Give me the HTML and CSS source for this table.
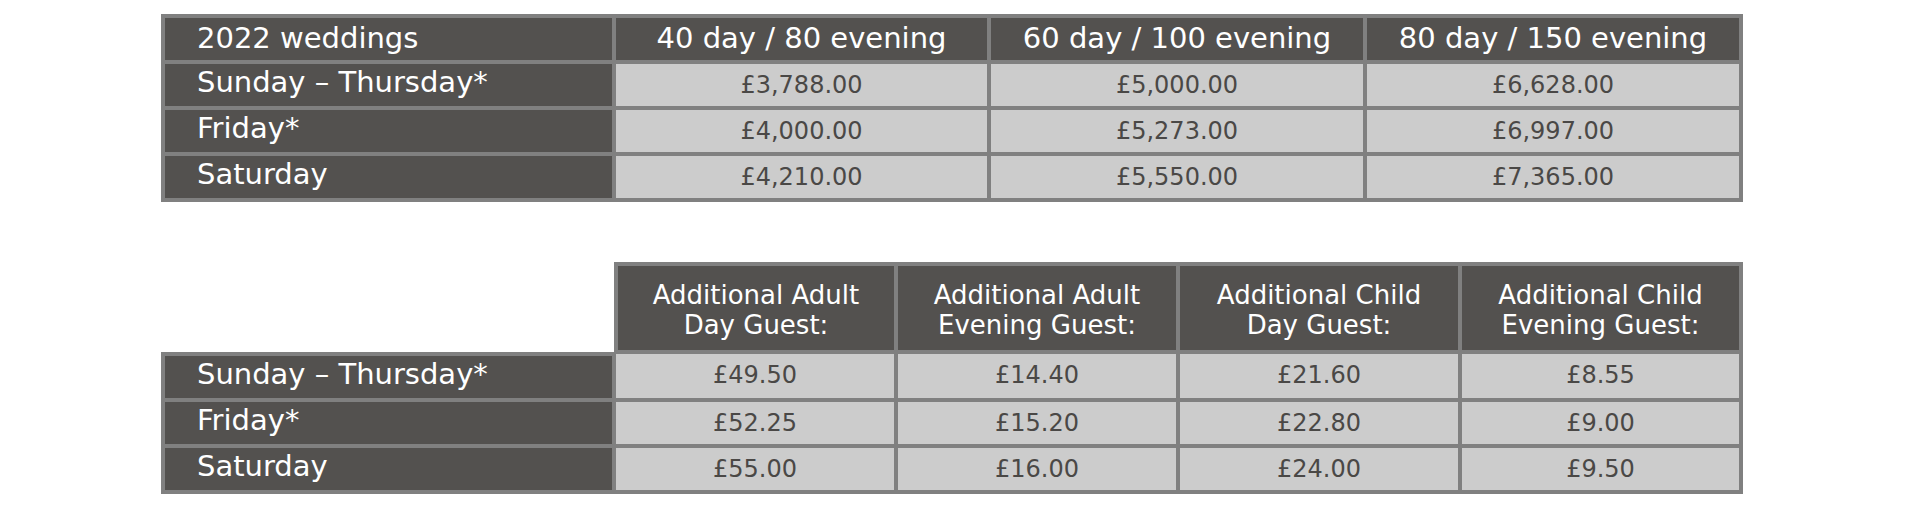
FILE: index.html
```html
<!DOCTYPE html>
<html lang="en">
<head>
<meta charset="utf-8">
<title>2022 weddings</title>
<link rel="stylesheet" href="styles.css">
</head>
<body>
<div class="page">
  <table class="rates rates-main">
    <thead>
      <tr>
        <th class="label head w-label">2022 weddings</th>
        <th class="head w-a">40 day / 80 evening</th>
        <th class="head w-b">60 day / 100 evening</th>
        <th class="head w-c">80 day / 150 evening</th>
      </tr>
    </thead>
    <tbody>
      <tr>
        <th class="label">Sunday – Thursday*</th>
        <td>£3,788.00</td>
        <td>£5,000.00</td>
        <td>£6,628.00</td>
      </tr>
      <tr>
        <th class="label">Friday*</th>
        <td>£4,000.00</td>
        <td>£5,273.00</td>
        <td>£6,997.00</td>
      </tr>
      <tr>
        <th class="label">Saturday</th>
        <td>£4,210.00</td>
        <td>£5,550.00</td>
        <td>£7,365.00</td>
      </tr>
    </tbody>
  </table>

  <table class="rates rates-extra">
    <thead>
      <tr>
        <td class="corner w-label"></td>
        <th class="head2 w-g">Additional Adult<br>Day Guest:</th>
        <th class="head2 w-g">Additional Adult<br>Evening Guest:</th>
        <th class="head2 w-g">Additional Child<br>Day Guest:</th>
        <th class="head2 w-g2">Additional Child<br>Evening Guest:</th>
      </tr>
    </thead>
    <tbody>
      <tr>
        <th class="label">Sunday – Thursday*</th>
        <td>£49.50</td>
        <td>£14.40</td>
        <td>£21.60</td>
        <td>£8.55</td>
      </tr>
      <tr>
        <th class="label">Friday*</th>
        <td>£52.25</td>
        <td>£15.20</td>
        <td>£22.80</td>
        <td>£9.00</td>
      </tr>
      <tr>
        <th class="label">Saturday</th>
        <td>£55.00</td>
        <td>£16.00</td>
        <td>£24.00</td>
        <td>£9.50</td>
      </tr>
    </tbody>
  </table>
</div>
</body>
</html>
```

FILE: styles.css
```css
html, body {
  margin: 0;
  padding: 0;
  background: #ffffff;
}

body {
  font-family: "DejaVu Sans", "Liberation Sans", sans-serif;
}

.page {
  display: flex;
  flex-direction: column;
  gap: 60px;
  padding: 14px 0 0 161px;
}

.rates {
  width: 1582px;
  table-layout: fixed;
  border-collapse: separate;
  border-spacing: 0;
}

.rates th,
.rates td {
  box-sizing: border-box;
  border: 2px solid #808080;
  padding: 0;
  vertical-align: top;
  font-weight: 400;
}

.rates tr > :first-child { border-left-width: 4px; }
.rates tr > :last-child { border-right-width: 4px; }
.rates thead tr > * { border-top-width: 4px; }
.rates tbody tr:last-child > * { border-bottom-width: 4px; }

.w-label { width: 453px; }
.w-a { width: 375px; }
.w-b { width: 376px; }
.w-c { width: 378px; }
.w-g { width: 282px; }
.w-g2 { width: 283px; }

/* dark header / label cells */
.rates .head,
.rates .head2,
.rates .label {
  background: #53514f;
  color: #ffffff;
}

.rates .label {
  text-align: left;
  font-size: 29px;
  line-height: 34px;
  padding: 1px 0 7px 32px;
  white-space: nowrap;
}

.rates .head {
  text-align: center;
  font-size: 29px;
  line-height: 38px;
  padding: 1px 0 3px 0;
  white-space: nowrap;
}

.rates .head.label {
  text-align: left;
  padding: 1px 0 3px 32px;
}

.rates .head2 {
  text-align: center;
  font-size: 26px;
  line-height: 30px;
  padding: 14px 0 10px;
}

/* light value cells */
.rates td {
  background: #cccccc;
  color: #4a4846;
  text-align: center;
  font-size: 24px;
  line-height: 42px;
}

/* empty top-left corner of the second table */
.rates td.corner {
  border: 0;
  background: transparent;
}

.rates .corner + th { border-left-width: 4px; }

.rates-extra tbody tr:first-child > .label { border-top-width: 4px; }
```
